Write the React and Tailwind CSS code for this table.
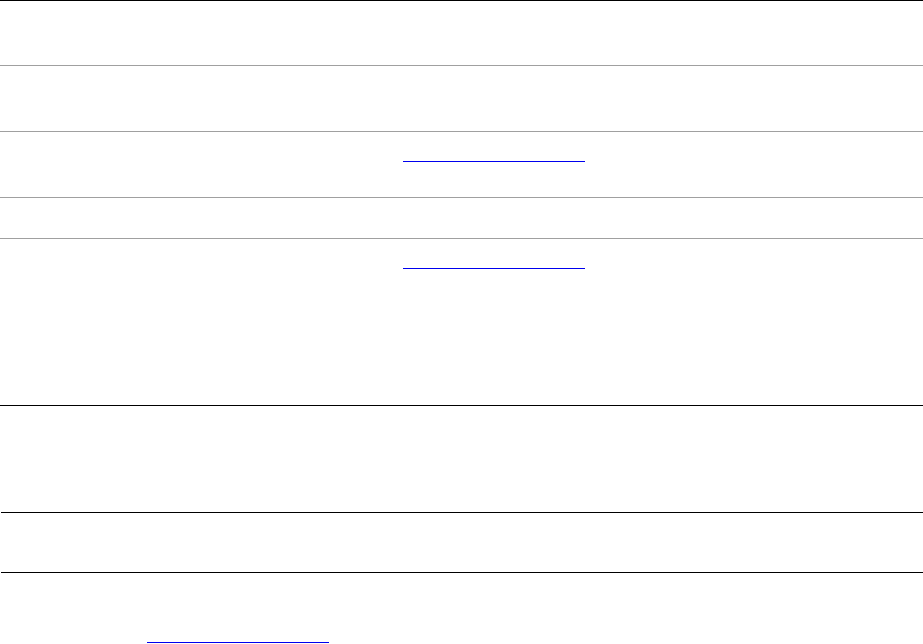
export default function App() {
  return (
    <div className="w-[923px] h-[644px] bg-white flex flex-col overflow-hidden" style={{ fontFamily: '"Liberation Sans", Arial, sans-serif' }}>
      <div className="h-px bg-black" />
      <div className="h-[65px] border-b border-[#a0a0a0]" />
      <div className="h-[66px] border-b border-[#a0a0a0]" />
      <div className="h-[66px] border-b border-[#a0a0a0] flex flex-col">
        <div className="h-[29px]" />
        <div className="pl-[403px]">
          <div className="w-[182px] h-px bg-[#0000ee]" />
        </div>
      </div>
      <div className="h-[41px] border-b border-[#a0a0a0]" />
      <div className="h-[166px] flex flex-col">
        <div className="h-[29px]" />
        <div className="pl-[403px]">
          <div className="w-[182px] h-px bg-[#0000ee]" />
        </div>
      </div>
      <div className="h-px bg-black" />
      <div className="h-[106px]" />
      <div className="h-px bg-black ml-px" />
      <div className="h-[59px]" />
      <div className="h-px bg-black ml-px" />
      <div className="h-[69px]" />
      <div className="pl-[147px]">
        <div className="w-[182px] h-px bg-[#0000ee]" />
      </div>
    </div>
  );
}
